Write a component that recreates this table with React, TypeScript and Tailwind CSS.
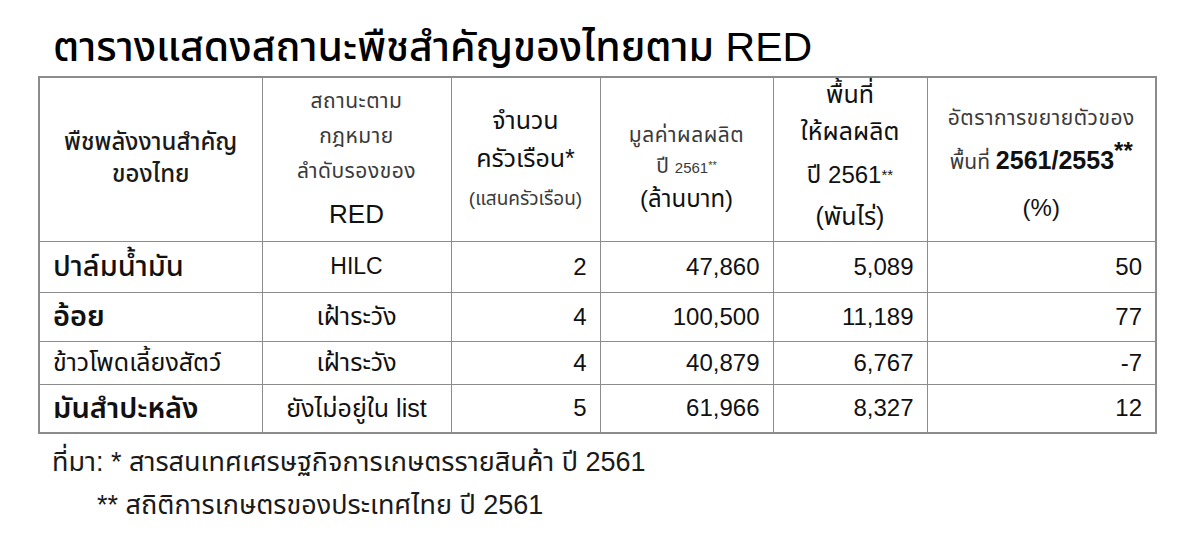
const rows = [
  { name: "ปาล์มน้ำมัน", nameCls: "text-[29px] font-medium", status: "HILC", statusCls: "text-[23px]", hh: "2", value: "47,860", area: "5,089", growth: "50", h: "h-[51px]" },
  { name: "อ้อย", nameCls: "text-[29px] font-semibold", status: "เฝ้าระวัง", statusCls: "text-[25px]", hh: "4", value: "100,500", area: "11,189", growth: "77", h: "h-[49px]" },
  { name: "ข้าวโพดเลี้ยงสัตว์", nameCls: "text-[25px] font-normal", status: "เฝ้าระวัง", statusCls: "text-[25px]", hh: "4", value: "40,879", area: "6,767", growth: "-7", h: "h-[43px]" },
  { name: "มันสำปะหลัง", nameCls: "text-[29px] font-semibold", status: "ยังไม่อยู่ใน list", statusCls: "text-[25px]", hh: "5", value: "61,966", area: "8,327", growth: "12", h: "h-[49px]" },
]

const cell = "border border-[#8c8c8c]"
const num = "text-right pr-[13px] text-[24px] leading-none"

export default function App() {
  return (
    <div className="w-[1200px] h-[548px] bg-white text-[#111] font-['Liberation_Sans','Noto_Sans_Thai','Noto_Sans',sans-serif]">
      <div className="pt-[23px] pl-[53px] text-[41px] leading-[48px] font-medium text-black">
        ตารางแสดงสถานะพืชสำคัญของไทยตาม <span className="font-normal">RED</span>
      </div>
      <table className="ml-[38px] mt-[5px] border-collapse table-fixed border-2 border-[#8c8c8c] w-[1117px]">
        <colgroup>
          <col className="w-[223px]" />
          <col className="w-[189px]" />
          <col className="w-[149px]" />
          <col className="w-[173px]" />
          <col className="w-[154px]" />
          <col className="w-[229px]" />
        </colgroup>
        <thead>
          <tr className="h-[164px] align-top text-center font-normal">
            <th className={`${cell} align-middle font-medium text-[24px] leading-[32px] text-[#1a1a1a] pb-[2px]`}>
              พืชพลังงานสำคัญ
              <br />
              ของไทย
            </th>
            <th className={`${cell} font-normal text-[#3a3a3a] pt-[5px]`}>
              <div className="text-[21px] leading-[35px] tracking-[0.5px]">สถานะตาม</div>
              <div className="text-[21px] leading-[35px] tracking-[0.5px]">กฎหมาย</div>
              <div className="text-[21px] leading-[35px] tracking-[0.5px]">ลำดับรองของ</div>
              <div className="text-[26px] leading-[52px] text-[#111]">RED</div>
            </th>
            <th className={`${cell} font-normal pt-[23px]`}>
              <div className="text-[25px] leading-[38px]">จำนวน</div>
              <div className="text-[25px] leading-[38px]">ครัวเรือน*</div>
              <div className="text-[19px] leading-[44px] text-[#3a3a3a]">(แสนครัวเรือน)</div>
            </th>
            <th className={`${cell} font-normal pt-[41px]`}>
              <div className="text-[21px] leading-[31px] text-[#3a3a3a] tracking-[0.5px]">มูลค่าผลผลิต</div>
              <div className="text-[21px] leading-[31px] text-[#3a3a3a]">
                ปี <span className="text-[15px]">2561</span>
                <span className="text-[11px] align-top">**</span>
              </div>
              <div className="text-[24px] leading-[31px]">(ล้านบาท)</div>
            </th>
            <th className={`${cell} font-normal`}>
              <div className="text-[25px] leading-[33px]">พื้นที่</div>
              <div className="text-[25px] leading-[41px]">ให้ผลผลิต</div>
              <div className="text-[24px] leading-[45px]">
                ปี 2561<span className="text-[15px] align-top">**</span>
              </div>
              <div className="text-[25px] leading-[38px]">(พันไร่)</div>
            </th>
            <th className={`${cell} font-normal pt-[19px]`}>
              <div className="text-[21px] leading-[42px] text-[#3a3a3a] tracking-[0.5px]">อัตราการขยายตัวของ</div>
              <div className="text-[21px] leading-[42px] text-[#3a3a3a]">
                พื้นที่ <span className="text-[25px] font-semibold text-[#111]">2561/2553</span>
                <span className="text-[24px] font-bold text-[#111] align-top leading-[24px]">**</span>
              </div>
              <div className="text-[24px] leading-[50px]">(%)</div>
            </th>
          </tr>
        </thead>
        <tbody>
          {rows.map((r) => (
            <tr key={r.name} className={r.h}>
              <td className={`${cell} pl-[13px] leading-none ${r.nameCls}`}>{r.name}</td>
              <td className={`${cell} text-center leading-none ${r.statusCls}`}>{r.status}</td>
              <td className={`${cell} ${num}`}>{r.hh}</td>
              <td className={`${cell} ${num}`}>{r.value}</td>
              <td className={`${cell} ${num}`}>{r.area}</td>
              <td className={`${cell} ${num}`}>{r.growth}</td>
            </tr>
          ))}
        </tbody>
      </table>
      <div className="pl-[52px] pt-[11px] text-[27px] leading-[34px] text-[#1a1a1a]">
        ที่มา: * สารสนเทศเศรษฐกิจการเกษตรรายสินค้า ปี 2561
      </div>
      <div className="pl-[97px] pt-[9px] text-[27px] leading-[34px] text-[#1a1a1a]">
        ** สถิติการเกษตรของประเทศไทย ปี 2561
      </div>
    </div>
  )
}
